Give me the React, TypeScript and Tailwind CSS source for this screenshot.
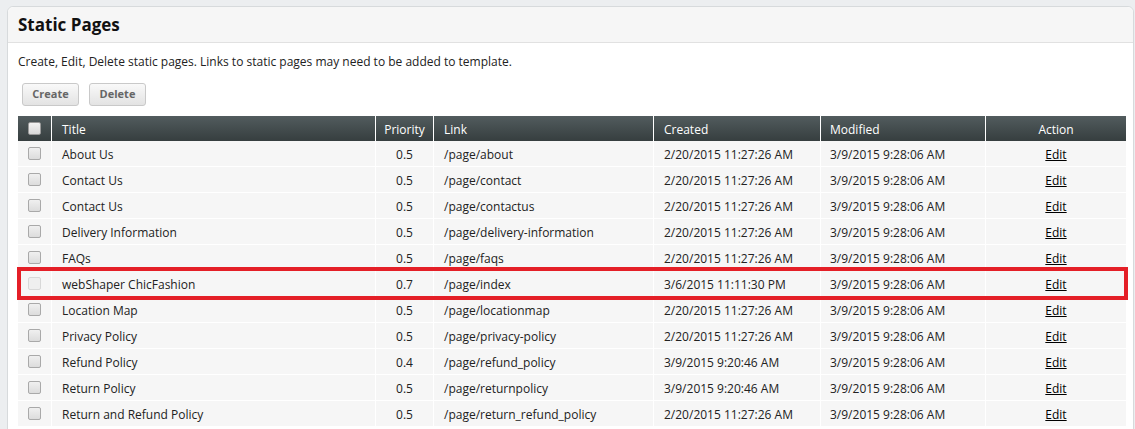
import React from "react";

const rows = [
  { t: "About Us", p: "0.5", l: "/page/about", c: "2/20/2015 11:27:26 AM", m: "3/9/2015 9:28:06 AM" },
  { t: "Contact Us", p: "0.5", l: "/page/contact", c: "2/20/2015 11:27:26 AM", m: "3/9/2015 9:28:06 AM" },
  { t: "Contact Us", p: "0.5", l: "/page/contactus", c: "2/20/2015 11:27:26 AM", m: "3/9/2015 9:28:06 AM" },
  { t: "Delivery Information", p: "0.5", l: "/page/delivery-information", c: "2/20/2015 11:27:26 AM", m: "3/9/2015 9:28:06 AM" },
  { t: "FAQs", p: "0.5", l: "/page/faqs", c: "2/20/2015 11:27:26 AM", m: "3/9/2015 9:28:06 AM" },
  { t: "webShaper ChicFashion", p: "0.7", l: "/page/index", c: "3/6/2015 11:11:30 PM", m: "3/9/2015 9:28:06 AM", dis: true },
  { t: "Location Map", p: "0.5", l: "/page/locationmap", c: "2/20/2015 11:27:26 AM", m: "3/9/2015 9:28:06 AM" },
  { t: "Privacy Policy", p: "0.5", l: "/page/privacy-policy", c: "2/20/2015 11:27:26 AM", m: "3/9/2015 9:28:06 AM" },
  { t: "Refund Policy", p: "0.4", l: "/page/refund_policy", c: "3/9/2015 9:20:46 AM", m: "3/9/2015 9:28:06 AM" },
  { t: "Return Policy", p: "0.5", l: "/page/returnpolicy", c: "3/9/2015 9:20:46 AM", m: "3/9/2015 9:28:06 AM" },
  { t: "Return and Refund Policy", p: "0.5", l: "/page/return_refund_policy", c: "2/20/2015 11:27:26 AM", m: "3/9/2015 9:28:06 AM" },
];

const grid = "grid grid-cols-[33px_324px_58px_220px_167px_165px_141px]";

function Box({ dis }: { dis?: boolean }) {
  return (
    <span
      className={
        dis
          ? "block w-[13px] h-[13px] rounded-[2px] border border-[#d8d8d8] bg-[#efefef]"
          : "block w-[13px] h-[13px] rounded-[2px] border border-[#a9a9a9] bg-gradient-to-b from-[#f0f0f0] to-[#dcdcdc]"
      }
    />
  );
}

export default function App() {
  return (
    <div
      className="relative h-[429px] w-[1135px] overflow-hidden bg-[#eceef0] pl-[7px] pt-[6px] text-[#222]"
      style={{ fontFamily: '"Open Sans", "Noto Sans", sans-serif' }}
    >
      <div className="w-[1127px] h-[440px] rounded-t-[6px] border border-[#d7dadc] bg-white">
        <div className="h-[36px] rounded-t-[6px] border-b border-[#e1e1e1] bg-[#f6f6f6] pl-[10px] flex items-center">
          <h1 className="text-[17px] font-bold text-[#111] leading-none">Static Pages</h1>
        </div>
        <div className="pl-[10px]">
          <p className="text-[12px] leading-[16px] mt-[11px]">
            Create, Edit, Delete static pages. Links to static pages may need to be added to template.
          </p>
          <div className="flex gap-[10px] mt-[13px] ml-[4px]">
            <button className="h-[23px] w-[57px] rounded-[3px] border border-[#c9c9c9] bg-gradient-to-b from-[#f9f9f9] to-[#e3e3e3] text-[11px] font-bold text-[#666]">
              Create
            </button>
            <button className="h-[23px] w-[57px] rounded-[3px] border border-[#c9c9c9] bg-gradient-to-b from-[#f9f9f9] to-[#e3e3e3] text-[11px] font-bold text-[#666]">
              Delete
            </button>
          </div>
          <div className="mt-[10px] w-[1108px] text-[12px]">
            <div className={`${grid} h-[25px] bg-gradient-to-b from-[#525c5e] to-[#363e3f] text-white`}>
              <div className="flex items-center justify-center">
                <span className="block w-[13px] h-[13px] rounded-[2px] border border-[#999] bg-gradient-to-b from-[#f2f2f2] to-[#d8d8d8]" />
              </div>
              <div className="border-l border-white flex items-center pl-[10px] pt-[2px]">Title</div>
              <div className="border-l border-white flex items-center justify-center pt-[2px]">Priority</div>
              <div className="border-l border-white flex items-center pl-[10px] pt-[2px]">Link</div>
              <div className="border-l border-white flex items-center pl-[10px] pt-[2px]">Created</div>
              <div className="border-l border-white flex items-center pl-[9px] pt-[2px]">Modified</div>
              <div className="border-l border-white flex items-center justify-center pt-[2px]">Action</div>
            </div>
            {rows.map((r, i) => (
              <div key={i} className={`${grid} h-[26px] bg-[#f6f6f6] border-b border-white text-[#222]`}>
                <div className="flex items-center justify-center"><Box dis={r.dis} /></div>
                <div className="border-l border-white flex items-center pl-[10px] pt-[2px]">{r.t}</div>
                <div className="border-l border-white flex items-center justify-center pt-[2px]">{r.p}</div>
                <div className="border-l border-white flex items-center pl-[10px] pt-[2px]">{r.l}</div>
                <div className="border-l border-white flex items-center pl-[10px] pt-[2px]">{r.c}</div>
                <div className="border-l border-white flex items-center pl-[9px] pt-[2px]">{r.m}</div>
                <div className="border-l border-white flex items-center justify-center pt-[3px]">
                  <a href="#" className="underline text-black">Edit</a>
                </div>
              </div>
            ))}
          </div>
        </div>
      </div>
      <div className="absolute left-[17px] top-[267px] w-[1111px] h-[33px] border-[4px] border-[#e41f27] pointer-events-none" />
    </div>
  );
}
